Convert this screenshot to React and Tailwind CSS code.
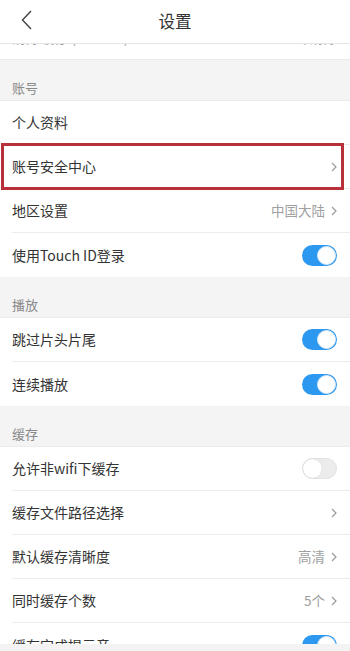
import React from "react";

const Chevron = () => (
  <svg width="6" height="10" viewBox="0 0 6 10" className="ml-[6px]">
    <path d="M1 1 L5 5 L1 9" fill="none" stroke="#9a9a9a" strokeWidth="1.2" />
  </svg>
);

const Toggle = ({ on }) =>
  on ? (
    <div className="w-[35px] h-[21px] rounded-full bg-[#2d98ef] flex items-center justify-end pr-[1px]">
      <div className="w-[19px] h-[19px] rounded-full bg-white border border-[#d8e8f5]" />
    </div>
  ) : (
    <div className="w-[35px] h-[21px] rounded-full bg-[#ececec] border border-[#e2e2e2] flex items-center justify-start">
      <div className="w-[19px] h-[19px] rounded-full bg-white shadow-[0_0_1px_rgba(0,0,0,0.2)]" />
    </div>
  );

const Row = ({ label, value, chevron, toggle, last, labelColor = "text-[#333]" }) => (
  <div className="h-[44px] bg-white pl-3">
    <div className={`h-full flex items-center pr-[13px] ${last ? "" : "border-b border-[#ececec]"}`}>
      <span className={`flex-1 text-[14px] ${labelColor}`}>{label}</span>
      {value && <span className="text-[13.5px] text-[#a0a0a0]">{value}</span>}
      {chevron && <Chevron />}
      {toggle !== undefined && <Toggle on={toggle} />}
    </div>
  </div>
);

const Section = ({ title }) => (
  <div className="h-[41px] bg-[#f4f4f4] flex items-end px-3 pb-[3px] border-b border-[#ececec] box-border">
    <span className="text-[13px] leading-[18px] text-[#8a8a8a]">{title}</span>
  </div>
);

export default function App() {
  return (
    <div
      className="w-[350px] h-[651px] overflow-hidden bg-[#f4f4f4] flex flex-col relative"
      style={{ fontFamily: '"Noto Sans CJK SC", "Noto Sans", sans-serif' }}
    >
      <div className="h-[44px] shrink-0 bg-white border-b border-[#e6e6e6] relative z-10 flex items-center justify-center">
        <svg width="12" height="20" viewBox="0 0 12 20" className="absolute left-[21px] top-[10px]">
          <path d="M10 1 L1.5 10 L10 19" fill="none" stroke="#444" strokeWidth="1.4" />
        </svg>
        <span className="text-[16.5px] text-[#333]">设置</span>
      </div>
      <div className="flex-1 overflow-hidden">
        <div className="-mt-[29px]">
          <Row label="清除缓存 (12.5MB)" value="立即清除" last labelColor="text-[#999]" />
        </div>
        <div className="border-t border-[#ececec]" />
        <Section title="账号" />
        <Row label="个人资料" />
        <div className="relative">
          <Row label="账号安全中心" chevron />
          <div className="absolute left-[1px] right-[6px] -top-[2px] -bottom-[1px] border-[3px] border-[#b8313a] pointer-events-none" />
        </div>
        <Row label="地区设置" value="中国大陆" chevron />
        <Row label="使用Touch ID登录" toggle={true} last />
        <Section title="播放" />
        <Row label="跳过片头片尾" toggle={true} />
        <Row label="连续播放" toggle={true} last />
        <Section title="缓存" />
        <Row label="允许非wifi下缓存" toggle={false} />
        <Row label="缓存文件路径选择" chevron />
        <Row label="默认缓存清晰度" value="高清" chevron />
        <Row label="同时缓存个数" value="5个" chevron />
        <Row label="缓存完成提示音" toggle={true} last />
      </div>
      <div className="absolute left-0 right-0 bottom-0 h-[7px] bg-[#f3f3f3]" />
    </div>
  );
}
